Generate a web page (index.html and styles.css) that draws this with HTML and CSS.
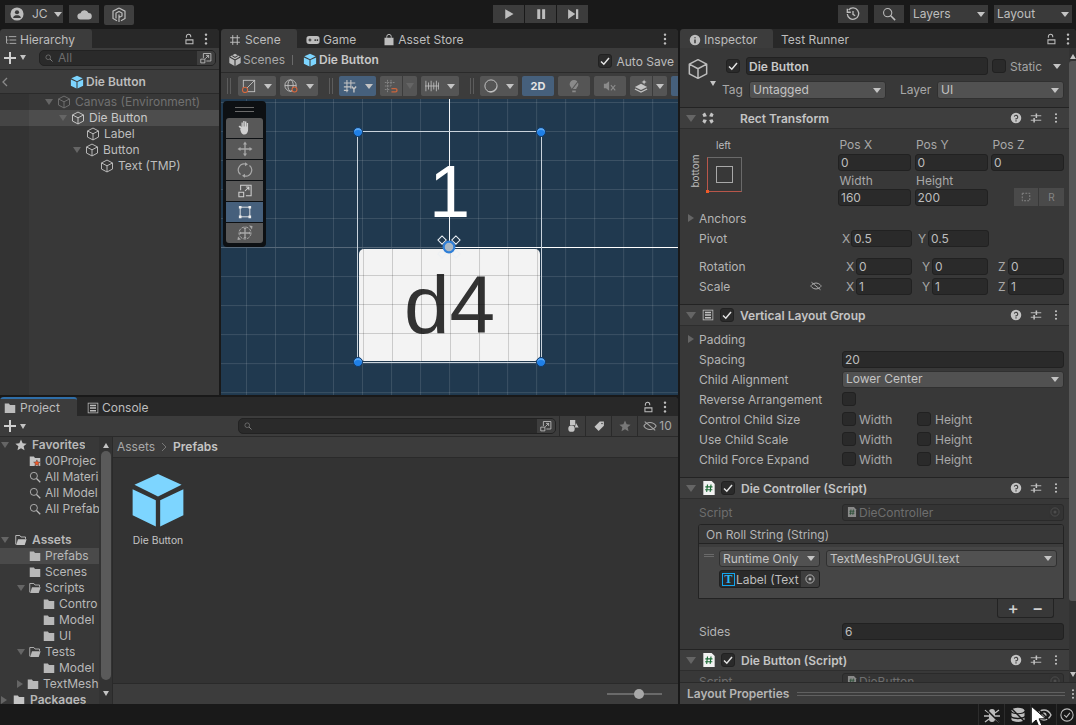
FILE: index.html
```html
<!DOCTYPE html>
<html lang="en">
<head>
<meta charset="utf-8">
<title>Unity Editor</title>
<link rel="stylesheet" href="styles.css">
</head>
<body>
<svg class="sprite" xmlns="http://www.w3.org/2000/svg">
  <symbol id="cube" viewBox="0 0 16 16"><path d="M8 1.2 14.300 4.500v7L8 14.800 1.700 11.500v-7zM1.700 4.500 8 7.800l6.300-3.300M8 7.800v7" fill="none" stroke="currentColor" stroke-width="1.100" stroke-linejoin="round"/></symbol>
  <symbol id="cubef" viewBox="0 0 16 16"><path d="M8 .8 14.500 3.800 8 7 1.500 3.800z" fill="#7dd5ff"/><path d="M1 5 7.400 8.100V15.300L1 12.200zM15 5 8.600 8.100V15.300L15 12.200z" fill="#7dd5ff"/></symbol>
  <symbol id="lock" viewBox="0 0 16 16"><path d="M4.500 9h8v4.500h-8zM5 6.500V5a2.500 2.500 0 0 1 5 0V6" fill="none" stroke="currentColor" stroke-width="1.200"/></symbol>
  <symbol id="kebab" viewBox="0 0 16 16"><g fill="currentColor"><circle cx="8" cy="3" r="1.400"/><circle cx="8" cy="8" r="1.400"/><circle cx="8" cy="13" r="1.400"/></g></symbol>
  <symbol id="list" viewBox="0 0 16 16"><path d="M5 3.500h10M6 8h9M6 12.500h9M1 3.500h2M3 8h1.500M3 12.500h1.500M2 3.500v9" fill="none" stroke="currentColor" stroke-width="1.100"/></symbol>
  <symbol id="hash" viewBox="0 0 16 16"><path d="M5 1.500v13M11 1.500v13M1.500 5h13M1.500 11h13" fill="none" stroke="currentColor" stroke-width="1.300"/></symbol>
  <symbol id="pad" viewBox="0 0 16 16"><path d="M3.500 3.500h9a3 3 0 0 1 3 3v3a3 3 0 0 1-3 3h-9a3 3 0 0 1-3-3v-3a3 3 0 0 1 3-3z" fill="currentColor"/><path d="M2.800 8h3.400M4.500 6.300v3.400" stroke="#282828" stroke-width="1.100"/><circle cx="10.500" cy="8" r="1" fill="#282828"/><circle cx="13" cy="8" r="1" fill="#282828"/></symbol>
  <symbol id="bag" viewBox="0 0 16 16"><path d="M2 5h12v10H2z" fill="currentColor"/><path d="M5 5V3.500a3 3 0 0 1 6 0V5" fill="none" stroke="currentColor" stroke-width="1.300"/></symbol>
  <symbol id="info" viewBox="0 0 16 16"><circle cx="8" cy="8" r="7" fill="currentColor"/><path d="M8 4.200v1.500M8 7.200v5" stroke="#3c3c3c" stroke-width="2"/></symbol>
  <symbol id="unity" viewBox="0 0 16 16"><path d="M8 .8 14.500 4.500v7L8 15.200 1.500 11.500v-7z" fill="currentColor"/><path d="M8 8 8 15M8 8 2 4.500M8 8l6-3.500M4.800 3 8 5l3.200-2" stroke="#3c3c3c" stroke-width="1.300" fill="none"/></symbol>
  <symbol id="user" viewBox="0 0 16 16"><circle cx="8" cy="8" r="7.500" fill="currentColor"/><circle cx="8" cy="6" r="2.400" fill="#3a3a3a"/><path d="M3.500 12.500c.5-2.500 2.500-3 4.500-3s4 .5 4.500 3z" fill="#3a3a3a"/></symbol>
  <symbol id="cloud" viewBox="0 0 16 12"><path d="M4 11.500a3.500 3.500 0 0 1-.5-7A4.800 4.800 0 0 1 12.400 4.300 3.600 3.600 0 0 1 12.300 11.500z" fill="currentColor"/></symbol>
  <symbol id="collab" viewBox="0 0 16 16"><path d="M8 1 14 4.200v7.200L10 13.700M8 1 2 4.200v7.200L6 13.700M5 11.600V6l3-1.600L11 6v3L8 10.500M8 7.500V15" fill="none" stroke="currentColor" stroke-width="1.200"/></symbol>
  <symbol id="play" viewBox="0 0 16 16"><path d="M3 1.500 14 8 3 14.500z" fill="currentColor"/></symbol>
  <symbol id="pause" viewBox="0 0 16 16"><path d="M3 1.500h4v13H3zM9.500 1.500h4v13h-4z" fill="currentColor"/></symbol>
  <symbol id="step" viewBox="0 0 16 16"><path d="M1.500 1.500 11 8l-9.500 6.500zM12 1.500h3v13h-3z" fill="currentColor"/></symbol>
  <symbol id="hist" viewBox="0 0 16 16"><path d="M3 3.400A6.500 6.500 0 1 1 1.500 8M1.500 2v4h4M8 4.500V8.500l2.500 1.500" fill="none" stroke="currentColor" stroke-width="1.500"/></symbol>
  <symbol id="search" viewBox="0 0 16 16"><circle cx="6.500" cy="6.500" r="4.700" fill="none" stroke="currentColor" stroke-width="1.200"/><path d="M10 10l5 5" stroke="currentColor" stroke-width="1.700"/></symbol>
  <symbol id="folder" viewBox="0 0 16 14"><path d="M1 1h5.500l1.500 2h7v10.500H1z" fill="currentColor"/></symbol>
  <symbol id="folderstar" viewBox="0 0 16 14"><path d="M1 1h5.500l1.500 2h7v10.500H1z" fill="#c4c4c4"/><path d="M10.500 5.500l1.300 2.800 3 .3-2.300 2 .7 3-2.700-1.600-2.700 1.600.7-3-2.300-2 3-.3z" fill="#f0592a" stroke="#383838" stroke-width=".6"/></symbol>
  <symbol id="folderopen" viewBox="0 0 16 14"><path d="M1 12.800V1h5.500L8 3h6v2.500" fill="none" stroke="currentColor" stroke-width="1.200"/><path d="M1.500 13.500 4 6h11.500l-2.500 7.500z" fill="currentColor"/></symbol>
  <symbol id="star" viewBox="0 0 16 16"><path d="M8 .8l2.200 4.900 5.300.6-4 3.500 1.200 5.200L8 12.300 3.300 15l1.200-5.200-4-3.500 5.300-.6z" fill="currentColor"/></symbol>
  <symbol id="ext" viewBox="0 0 16 16"><path d="M4.500 8V2h10v10h-6M11.500 4.500 7 9M8 4.500h3.500V8M1 9.500h5.500v5H1z" fill="none" stroke="currentColor" stroke-width="1.100"/></symbol>
  <symbol id="hand" viewBox="0 0 16 16"><path d="M4 9 1.500 6.500 3 5.500 4.500 7V2.500h1.300V6.500h.4V1h1.400v5.500h.4V1.500h1.400v5h.4V3h1.300v6.500c0 3-1.500 5-4 5s-3.200-2.500-4-5.500z" fill="currentColor"/></symbol>
  <symbol id="move" viewBox="0 0 16 16"><path d="M8 2.500v11M2.500 8h11" stroke="currentColor" stroke-width="1.300"/><path d="M8 .5 10 3.500H6zM8 15.500l2-3H6zM.5 8l3-2v4zM15.500 8l-3-2v4z" fill="currentColor"/></symbol>
  <symbol id="rotate" viewBox="0 0 16 16"><path d="M3.500 12.500A6 6 0 0 1 8.500 2M12.500 3.500A6 6 0 0 1 7.500 14" fill="none" stroke="currentColor" stroke-width="1.200"/><path d="M8 .3v4l3-2zM8 15.700v-4l-3 2z" fill="currentColor"/></symbol>
  <symbol id="scale" viewBox="0 0 16 16"><path d="M3 7V1.500h12v12H9M8 8l4.500-4.500M9 3.500h3.500V7M1 9.500h5.500v5H1z" fill="none" stroke="currentColor" stroke-width="1.200"/></symbol>
  <symbol id="rect" viewBox="0 0 16 16"><path d="M2.500 3v10M13.500 3v10M3 2.500h10M3 13.500h10" stroke="currentColor" stroke-width="1" fill="none"/><path d="M1 1h3v3H1zM12 1h3v3h-3zM1 12h3v3H1zM12 12h3v3h-3z" fill="currentColor"/></symbol>
  <symbol id="xform" viewBox="0 0 16 16"><circle cx="8" cy="8" r="6" fill="none" stroke="currentColor" stroke-width="1" stroke-dasharray="3 1"/><path d="M8 3.500v9M3.500 8h9" stroke="currentColor" stroke-width="1.300"/><path d="M8 2 9.500 4h-3zM8 14l1.500-2h-3zM2 8l2-1.500v3zM14 8l-2-1.500v3zM12 .5l3.500.5-.5 3.500zM1 11.500l-.5 3.500 3.500-.5z" fill="currentColor"/></symbol>
  <symbol id="anch" viewBox="0 0 16 16"><path d="M.5 3 4 .5 6.500 5.500 2 6.500zM15.500 3 12 .5 9.500 5.500 14 6.500zM.5 13 4 15.500 6.500 10.500 2 9.500zM15.500 13 12 15.500 9.500 10.500 14 9.500z" fill="currentColor"/></symbol>
  <symbol id="vlg" viewBox="0 0 16 16"><rect x="1.500" y="1.500" width="13" height="13" fill="none" stroke="currentColor" stroke-width="1"/><path d="M4 4.500h8M4 8h8M4 11.500h8" stroke="currentColor" stroke-width="2"/></symbol>
  <symbol id="help" viewBox="0 0 16 16"><circle cx="8" cy="8" r="7" fill="currentColor"/><path d="M5.800 6.200A2.300 2.300 0 1 1 8 9v1" fill="none" stroke="#3e3e3e" stroke-width="1.500"/><path d="M7.200 11h1.600v1.600H7.200z" fill="#3e3e3e"/></symbol>
  <symbol id="sliders" viewBox="0 0 16 16"><path d="M1 5h14M1 11h14" stroke="currentColor" stroke-width="1.200"/><path d="M9.500 2v6h-2V2zM6.500 8v6h-2V8z" fill="currentColor"/></symbol>
  <symbol id="script" viewBox="0 0 16 16"><path d="M1.500 0H11l3.500 3.500V16h-13z" fill="#f2f2f2"/><path d="M6.300 4 5.300 12.500M10.300 4 9.300 12.500M3.800 6.700h8.200M3.600 10h8.200" stroke="#1c6b36" stroke-width="1.300"/></symbol>
  <symbol id="eyeoff" viewBox="0 0 16 16"><path d="M1 8s2.500-4 7-4 7 4 7 4-2.500 4-7 4-7-4-7-4z" fill="none" stroke="currentColor" stroke-width="1.200"/><path d="M2 3 14 13" stroke="currentColor" stroke-width="1.200"/></symbol>
  <symbol id="statuseye" viewBox="0 0 16 16"><path d="M1 8s2.500-5 7-5 7 5 7 5-2.500 5-7 5-7-5-7-5z" fill="none" stroke="currentColor" stroke-width="1.400"/><circle cx="8" cy="8" r="2.500" fill="currentColor"/><path d="M1 1l14 14" stroke="#191919" stroke-width="1.500"/></symbol>
  <symbol id="target" viewBox="0 0 16 16"><circle cx="8" cy="8" r="5.500" fill="none" stroke="currentColor" stroke-width="1.200"/><circle cx="8" cy="8" r="2" fill="currentColor"/></symbol>
  <symbol id="bug" viewBox="0 0 16 16"><path d="M5 5a3 3 0 0 1 6 0v7a3 3 0 0 1-6 0z" fill="currentColor"/><path d="M1 3l4 3M15 3l-4 3M0 9h5M16 9h-5M1 15l4-3M15 15l-4-3" stroke="currentColor" stroke-width="1.300"/><path d="M1 1l14 14" stroke="#191919" stroke-width="1.500"/></symbol>
  <symbol id="db" viewBox="0 0 16 16"><ellipse cx="8" cy="3.500" rx="6.500" ry="2.800" fill="currentColor"/><path d="M1.500 5.500c1 2.300 12 2.300 13 0V9c-1 2.300-12 2.300-13 0zM1.500 10.500c1 2.300 12 2.300 13 0v2.300c-1 2.800-12 2.800-13 0z" fill="currentColor"/><path d="M1 1l14 14" stroke="#191919" stroke-width="1.500"/></symbol>
  <symbol id="check" viewBox="0 0 16 16"><circle cx="8" cy="8" r="7" fill="none" stroke="currentColor" stroke-width="1.200"/><path d="M4.800 8 7.300 10.500 11.300 5.500" fill="none" stroke="currentColor" stroke-width="1.200"/></symbol>
  <symbol id="tick" viewBox="0 0 12 12"><path d="M2 6.500 4.800 9.200 10 3" fill="none" stroke="currentColor" stroke-width="1.500"/></symbol>
  <symbol id="snapgrid" viewBox="0 0 16 16"><path d="M4 1v14M8 1v7M1 4h11M1 8h7M1 12h6" stroke="currentColor" stroke-width="1" stroke-dasharray="2 1"/><path d="M8.500 11h4.500a1.800 1.800 0 0 1 0 3.700H8.500" fill="none" stroke="#c9653d" stroke-width="1.600"/></symbol>
  <symbol id="gridy" viewBox="0 0 16 16"><path d="M4.500 1v14M9 1v10M1 4.500h13M1 9h8M1 13h5" stroke="currentColor" stroke-width="1.200"/><path d="M10 8.500l2.500 3 2.500-3M12.500 11.500V15.500" fill="none" stroke="currentColor" stroke-width="1.600"/></symbol>
  <symbol id="ticks" viewBox="0 0 16 16"><path d="M1 2v12M4 4v8M7 2v12M10 4v8M13 2v12M15.500 4v8M0 8h16" stroke="currentColor" stroke-width=".9"/></symbol>
  <symbol id="gizsq" viewBox="0 0 16 16"><rect x="1.500" y="1.500" width="13" height="13" fill="none" stroke="currentColor" stroke-width="1"/><path d="M1.500 14.500 14.500 1.500" stroke="currentColor" stroke-width="1"/><circle cx="3.500" cy="12.500" r="3" fill="#555" stroke="#d9673c" stroke-width="1.200"/></symbol>
  <symbol id="globe" viewBox="0 0 16 16"><circle cx="7.500" cy="7.500" r="6.500" fill="none" stroke="currentColor" stroke-width="1"/><ellipse cx="7.500" cy="7.500" rx="3" ry="6.500" fill="none" stroke="currentColor" stroke-width="1"/><path d="M1 7.500h13" stroke="currentColor" stroke-width="1"/><circle cx="12" cy="12" r="2.800" fill="#555" stroke="#d9673c" stroke-width="1.200"/></symbol>
  <symbol id="shade" viewBox="0 0 16 16"><circle cx="8" cy="8" r="7" fill="none" stroke="currentColor" stroke-width="1.100"/><path d="M14.800 7A7 7 0 0 1 3 13 8 8 0 0 0 14.800 7z" fill="currentColor"/></symbol>
  <symbol id="bulb" viewBox="0 0 16 16"><path d="M5.500 11.500C5 9 3 8.500 3 6a5 5 0 0 1 10 0c0 2.500-2 3-2.500 5.500z" fill="currentColor"/><path d="M6 13h4v2H6z" fill="currentColor"/><path d="M14 1 4 14" stroke="#555" stroke-width="1.200"/></symbol>
  <symbol id="audio" viewBox="0 0 16 16"><path d="M1 5.500h2.500L7 2.500v11L3.500 10.500H1z" fill="currentColor"/><path d="M9 7l5 6M14 7l-5 6" stroke="currentColor" stroke-width="1.300"/></symbol>
  <symbol id="fx" viewBox="0 0 16 16"><path d="M1 9l7-3.500L15 9l-7 3.500z" fill="currentColor"/><path d="M1 11.500l7 3.500 7-3.500" fill="none" stroke="currentColor" stroke-width="1.300"/><path d="M11.500.5l.8 2.200 2.200.8-2.200.8-.8 2.200-.8-2.200-2.200-.8 2.200-.8z" fill="currentColor"/></symbol>
  <symbol id="types" viewBox="0 0 16 16"><rect x="4" y="0" width="7" height="7" fill="currentColor"/><circle cx="6" cy="11.500" r="4.300" fill="currentColor"/><path d="M12 4l3.500 6h-5z" fill="currentColor"/></symbol>
  <symbol id="tag" viewBox="0 0 16 16"><path d="M9 2h5.500v5.500l-7 7-5.500-5.500z" fill="currentColor"/><circle cx="12" cy="4.800" r="1" fill="#3c3c3c"/></symbol>
</svg>

<div class="app">
  <header class="topbar">
    <button class="tb tb-acct"><svg class="i14"><use href="#user"/></svg><span class="acct-name">JC</span><i class="tri-d light"></i></button>
    <button class="tb tb-ico tb-cloud"><svg class="i-cloud"><use href="#cloud"/></svg></button>
    <button class="tb tb-ico tb-collab"><svg class="i16"><use href="#collab"/></svg></button>
    <div class="playgroup">
      <button class="pb"><svg class="i12"><use href="#play"/></svg></button>
      <button class="pb"><svg class="i12"><use href="#pause"/></svg></button>
      <button class="pb"><svg class="i12"><use href="#step"/></svg></button>
    </div>
    <button class="tb tb-ico tb-hist"><svg class="i14"><use href="#hist"/></svg></button>
    <button class="tb tb-ico tb-srch"><svg class="i14"><use href="#search"/></svg></button>
    <button class="tb tb-dd"><span>Layers</span><i class="tri-d light"></i></button>
    <button class="tb tb-dd"><span>Layout</span><i class="tri-d light"></i></button>
  </header>

  <main class="workspace">
    <div class="leftzone">
      <div class="upper">
        <section class="panel hierarchy">
          <div class="tabs">
            <div class="tab active tab-hier"><svg class="i12"><use href="#list"/></svg><span>Hierarchy</span></div>
            <div class="tabtools"><svg class="i14"><use href="#lock"/></svg><svg class="i14"><use href="#kebab"/></svg></div>
          </div>
          <div class="hier-tools">
            <span class="plus"></span><i class="tri-d light small"></i>
            <div class="searchbox sb-hier"><svg class="i8"><use href="#search"/></svg><span class="ph">All</span><span class="sb-side"><svg class="i12"><use href="#ext"/></svg></span></div>
          </div>
          <div class="prefab-head"><svg class="i-back" viewBox="0 0 6 10"><path d="M5 1 1 5l4 4" fill="none" stroke="currentColor" stroke-width="1.300"/></svg><svg class="i14 cubeb"><use href="#cubef"/></svg><b>Die Button</b></div>
          <div class="tree">
            <div class="hrow l0 dim"><i class="tri-d"></i><svg class="i14"><use href="#cube"/></svg><span>Canvas (Environment)</span></div>
            <div class="hrow l1 sel"><i class="tri-d"></i><svg class="i14"><use href="#cube"/></svg><span>Die Button</span></div>
            <div class="hrow l2"><i class="nop"></i><svg class="i14"><use href="#cube"/></svg><span>Label</span></div>
            <div class="hrow l2"><i class="tri-d"></i><svg class="i14"><use href="#cube"/></svg><span>Button</span></div>
            <div class="hrow l3"><i class="nop"></i><svg class="i14"><use href="#cube"/></svg><span>Text (TMP)</span></div>
          </div>
        </section>

        <section class="panel scene">
          <div class="tabs">
            <div class="tab active tab-scene"><svg class="i12"><use href="#hash"/></svg><span>Scene</span></div>
            <div class="tab tab-game"><svg class="i14"><use href="#pad"/></svg><span>Game</span></div>
            <div class="tab tab-store"><svg class="i12"><use href="#bag"/></svg><span>Asset Store</span></div>
            <div class="tabtools"><svg class="i14"><use href="#kebab"/></svg></div>
          </div>
          <div class="crumbs">
            <svg class="i14"><use href="#unity"/></svg><span class="c-scenes">Scenes</span><span class="c-sep"></span>
            <svg class="i14"><use href="#cubef"/></svg><b class="c-die">Die Button</b>
            <span class="autosave"><span class="cb on"><svg><use href="#tick"/></svg></span><span class="as-label">Auto Save</span></span>
          </div>
          <div class="scene-tools">
            <span class="grip g1"></span>
            <span class="st w38"><svg class="i14"><use href="#gizsq"/></svg><i class="tri-d light"></i></span>
            <span class="st w38"><svg class="i14"><use href="#globe"/></svg><i class="tri-d light"></i></span>
            <span class="grip g2"></span>
            <span class="st w22 blue nojoin"><svg class="i14"><use href="#gridy"/></svg></span>
            <span class="st w15 blue join-r"><i class="tri-d light"></i></span>
            <span class="st w22 join-l"><svg class="i14 dimic"><use href="#snapgrid"/></svg></span>
            <span class="st w14 join-r"><i class="tri-d"></i></span>
            <span class="st w38"><svg class="i14"><use href="#ticks"/></svg><i class="tri-d light"></i></span>
            <span class="grip g3"></span>
            <span class="st w38"><svg class="i14"><use href="#shade"/></svg><i class="tri-d light"></i></span>
            <span class="st w32 blue two-d">2D</span>
            <span class="st w32"><svg class="i14 dimic"><use href="#bulb"/></svg></span>
            <span class="st w32"><svg class="i14 dimic"><use href="#audio"/></svg></span>
            <span class="st w22 join-l"><svg class="i14"><use href="#fx"/></svg></span>
            <span class="st w14 join-r"><i class="tri-d light"></i></span>
            <span class="st w32 blue"></span>
          </div>
          <div class="viewport">
            <div class="palette">
              <div class="pal-grip"></div>
              <div class="pal-btn"><svg class="i16"><use href="#hand"/></svg></div>
              <div class="pal-btn"><svg class="i16"><use href="#move"/></svg></div>
              <div class="pal-btn"><svg class="i16"><use href="#rotate"/></svg></div>
              <div class="pal-btn"><svg class="i14"><use href="#scale"/></svg></div>
              <div class="pal-btn on"><svg class="i14"><use href="#rect"/></svg></div>
              <div class="pal-btn"><svg class="i16"><use href="#xform"/></svg></div>
            </div>
            <div class="axis-h"></div>
            <div class="axis-h-bright"></div>
            <div class="axis-v"></div>
            <div class="die-label">1</div>
            <div class="die-btn">d4</div>
            <div class="sel-rect"><i class="h h-tl"></i><i class="h h-tr"></i><i class="h h-bl"></i><i class="h h-br"></i></div>
            <svg class="pivot" viewBox="0 0 26 26"><g fill="none" stroke="#e8eef4" stroke-width="1.100"><path d="M5.500 1 1 5.500 5.500 10 10 5.500zM20.500 1 16 5.500 20.500 10 25 5.500z"/><path d="M5.500 16 1 20.500 5.500 25 10 20.500zM20.500 16 16 20.500 20.500 25 25 20.500z" stroke-opacity=".5"/></g><circle cx="13" cy="13" r="5.800" fill="#a9b7c4" stroke="#2f7fd8" stroke-width="2.400"/></svg>
          </div>
        </section>
      </div>

      <section class="panel project">
        <div class="tabs">
          <div class="tab active tab-proj"><svg class="i12"><use href="#folder"/></svg><span>Project</span></div>
          <div class="tab tab-cons"><svg class="i12"><use href="#vlg"/></svg><span>Console</span></div>
          <div class="tabtools"><svg class="i14"><use href="#lock"/></svg><svg class="i14"><use href="#kebab"/></svg></div>
        </div>
        <div class="proj-tools">
          <span class="plus"></span><i class="tri-d light small"></i>
          <div class="searchbox sb-proj"><svg class="i8"><use href="#search"/></svg><span class="sb-side"><svg class="i12"><use href="#ext"/></svg></span></div>
          <span class="pt"><svg class="i12"><use href="#types"/></svg></span>
          <span class="pt"><svg class="i12"><use href="#tag"/></svg></span>
          <span class="pt faint"><svg class="i12"><use href="#star"/></svg></span>
          <span class="pt pt-wide"><svg class="i14"><use href="#eyeoff"/></svg>10</span>
        </div>
        <div class="proj-body">
          <div class="ptree">
            <div class="prow bold"><i class="tri-d"></i><svg class="i12"><use href="#star"/></svg><span>Favorites</span></div>
            <div class="prow ind1"><svg class="i12"><use href="#folderstar"/></svg><span>00Projec</span></div>
            <div class="prow ind1"><svg class="i12"><use href="#search"/></svg><span>All Materi</span></div>
            <div class="prow ind1"><svg class="i12"><use href="#search"/></svg><span>All Model</span></div>
            <div class="prow ind1"><svg class="i12"><use href="#search"/></svg><span>All Prefab</span></div>
            <div class="prow bold gap15"><i class="tri-d"></i><svg class="i12"><use href="#folderopen"/></svg><span>Assets</span></div>
            <div class="prow ind1 sel"><svg class="i12"><use href="#folder"/></svg><span>Prefabs</span></div>
            <div class="prow ind1"><svg class="i12"><use href="#folder"/></svg><span>Scenes</span></div>
            <div class="prow ind1a"><i class="tri-d"></i><svg class="i12"><use href="#folderopen"/></svg><span>Scripts</span></div>
            <div class="prow ind2"><svg class="i12"><use href="#folder"/></svg><span>Contro</span></div>
            <div class="prow ind2"><svg class="i12"><use href="#folder"/></svg><span>Model</span></div>
            <div class="prow ind2"><svg class="i12"><use href="#folder"/></svg><span>UI</span></div>
            <div class="prow ind1a"><i class="tri-d"></i><svg class="i12"><use href="#folderopen"/></svg><span>Tests</span></div>
            <div class="prow ind2"><svg class="i12"><use href="#folder"/></svg><span>Model</span></div>
            <div class="prow ind1a"><i class="tri-r"></i><svg class="i12"><use href="#folder"/></svg><span>TextMesh</span></div>
            <div class="prow bold"><i class="tri-r"></i><svg class="i12"><use href="#folder"/></svg><span>Packages</span></div>
          </div>
          <div class="pscroll"><i class="tri-u light small"></i><div class="pthumb"></div><i class="tri-d light small"></i></div>
          <div class="pmain">
            <div class="pcrumbs"><span>Assets</span><svg class="i-chev" viewBox="0 0 6 10"><path d="M1 1l4 4-4 4" fill="none" stroke="currentColor"/></svg><b>Prefabs</b></div>
            <div class="pgrid">
              <figure class="asset"><svg class="asset-ic"><use href="#cubef"/></svg><figcaption>Die Button</figcaption></figure>
            </div>
            <div class="pfoot"><div class="zoomer"><i></i></div></div>
          </div>
        </div>
      </section>
    </div>

    <section class="panel inspector">
      <div class="tabs">
        <div class="tab active tab-insp"><svg class="i12"><use href="#info"/></svg><span>Inspector</span></div>
        <div class="tab tab-test"><span>Test Runner</span></div>
        <div class="tabtools"><svg class="i14"><use href="#lock"/></svg><svg class="i14"><use href="#kebab"/></svg></div>
      </div>
      <div class="insp-wrap">
        <div class="insp-scroll">
          <div class="go-head">
            <div class="go-icon"><svg class="i22"><use href="#cube"/></svg><i class="tri-d light small"></i></div>
            <div class="go-rows">
              <div class="go-row1">
                <span class="cb on"><svg><use href="#tick"/></svg></span>
                <span class="fld name">Die Button</span>
                <span class="cb"></span><span class="static">Static</span><i class="tri-d light"></i>
              </div>
              <div class="go-row2">
                <span class="tag-l">Tag</span><span class="dd dd-tag">Untagged<i class="tri-d light"></i></span>
                <span class="layer-l">Layer</span><span class="dd dd-layer">UI<i class="tri-d light"></i></span>
              </div>
            </div>
          </div>

          <div class="comp"><i class="tri-d"></i><svg class="i12 c-ic"><use href="#anch"/></svg><b class="c-title rt-title">Rect Transform</b><span class="c-tools"><svg class="i12"><use href="#help"/></svg><svg class="i12"><use href="#sliders"/></svg><svg class="i12"><use href="#kebab"/></svg></span></div>
          <div class="rt-top">
            <div class="anchor">
              <span class="a-left">left</span><span class="a-bottom">bottom</span>
              <div class="a-box"><div class="a-inner"></div><i class="a-dot"></i></div>
            </div>
            <div class="rt-grid">
              <label>Pos X</label><label>Pos Y</label><label>Pos Z</label>
              <span class="fld">0</span><span class="fld">0</span><span class="fld">0</span>
              <label class="l2nd">Width</label><label class="l2nd">Height</label><label class="l2nd"></label>
              <span class="fld">160</span><span class="fld">200</span>
              <span class="rt-btns"><span class="rb"><svg class="i10" viewBox="0 0 16 16"><path d="M2 2h12v12H2z" fill="none" stroke="currentColor" stroke-width="1.600" stroke-dasharray="3 2"/></svg></span><span class="rb">R</span></span>
            </div>
          </div>
          <div class="row"><i class="tri-r"></i><span class="lbl">Anchors</span></div>
          <div class="row"><span class="lbl">Pivot</span><span class="xy x-piv">X</span><span class="fld f61">0.5</span><span class="xy y-piv">Y</span><span class="fld f61">0.5</span></div>
          <div class="row mt8"><span class="lbl">Rotation</span><span class="xy x-rot">X</span><span class="fld f56">0</span><span class="xy y-rot">Y</span><span class="fld f56">0</span><span class="xy y-rot">Z</span><span class="fld f56">0</span></div>
          <div class="row"><span class="lbl lbl-scale">Scale<svg class="i12"><use href="#eyeoff"/></svg></span><span class="xy x-rot">X</span><span class="fld f56">1</span><span class="xy y-rot">Y</span><span class="fld f56">1</span><span class="xy y-rot">Z</span><span class="fld f56">1</span></div>

          <div class="comp mt8"><i class="tri-d"></i><svg class="i12 c-ic"><use href="#vlg"/></svg><span class="cb on c-cb"><svg><use href="#tick"/></svg></span><b class="c-title">Vertical Layout Group</b><span class="c-tools"><svg class="i12"><use href="#help"/></svg><svg class="i12"><use href="#sliders"/></svg><svg class="i12"><use href="#kebab"/></svg></span></div>
          <div class="row mt3"><i class="tri-r"></i><span class="lbl">Padding</span></div>
          <div class="row"><span class="lbl">Spacing</span><span class="fld grow">20</span></div>
          <div class="row"><span class="lbl">Child Alignment</span><span class="dd grow">Lower Center<i class="tri-d light"></i></span></div>
          <div class="row"><span class="lbl">Reverse Arrangement</span><span class="cb"></span></div>
          <div class="row"><span class="lbl">Control Child Size</span><span class="cb"></span><span class="cb-l">Width</span><span class="cb"></span><span class="cb-l">Height</span></div>
          <div class="row"><span class="lbl">Use Child Scale</span><span class="cb"></span><span class="cb-l">Width</span><span class="cb"></span><span class="cb-l">Height</span></div>
          <div class="row"><span class="lbl">Child Force Expand</span><span class="cb"></span><span class="cb-l">Width</span><span class="cb"></span><span class="cb-l">Height</span></div>

          <div class="comp mt8"><i class="tri-d"></i><svg class="i14 c-ic"><use href="#script"/></svg><span class="cb on c-cb"><svg><use href="#tick"/></svg></span><b class="c-title">Die Controller (Script)</b><span class="c-tools"><svg class="i12"><use href="#help"/></svg><svg class="i12"><use href="#sliders"/></svg><svg class="i12"><use href="#kebab"/></svg></span></div>
          <div class="row mt3 off"><span class="lbl">Script</span><span class="fld grow obj"><svg class="i10"><use href="#script"/></svg>DieController<svg class="i12 obj-t"><use href="#target"/></svg></span></div>
          <div class="evt">
            <div class="evt-head">On Roll String (String)</div>
            <div class="evt-body">
              <div class="evt-row"><span class="ev-grip"></span><span class="dd ev-rt">Runtime Only<i class="tri-d light"></i></span><span class="dd ev-fn">TextMeshProUGUI.text<i class="tri-d light"></i></span></div>
              <div class="evt-row2"><span class="fld ev-obj"><span class="tmp">T</span><span class="ev-name">Label (Text</span><span class="ev-t"><svg class="i12"><use href="#target"/></svg></span></span></div>
            </div>
          </div>
          <div class="evt-foot"><span>+</span><span>−</span></div>
          <div class="row mt3"><span class="lbl">Sides</span><span class="fld grow">6</span></div>

          <div class="comp mt8"><i class="tri-d"></i><svg class="i14 c-ic"><use href="#script"/></svg><span class="cb on c-cb"><svg><use href="#tick"/></svg></span><b class="c-title">Die Button (Script)</b><span class="c-tools"><svg class="i12"><use href="#help"/></svg><svg class="i12"><use href="#sliders"/></svg><svg class="i12"><use href="#kebab"/></svg></span></div>
          <div class="row off"><span class="lbl">Script</span><span class="fld grow obj"><svg class="i10"><use href="#script"/></svg>DieButton<svg class="i12 obj-t"><use href="#target"/></svg></span></div>
        </div>
        <div class="vscroll"><i class="tri-u light small"></i><div class="vthumb"></div><i class="tri-d light small"></i></div>
      </div>
      <div class="layoutprops"><b>Layout Properties</b><span class="lp-lines"></span><svg class="i12"><use href="#kebab"/></svg></div>
    </section>
  </main>

  <footer class="status">
    <span class="st-cell"><svg class="i16"><use href="#bug"/></svg></span>
    <span class="st-cell"><svg class="i16"><use href="#db"/></svg></span>
    <span class="st-cell"><svg class="i16"><use href="#statuseye"/></svg></span>
    <span class="st-cell st-last"><svg class="i14"><use href="#check"/></svg></span>
    <svg class="cursor" viewBox="0 0 14 20"><path d="M1 1v15l4-3.500 2.500 6 2.500-1-2.500-6H13z" fill="#fff" stroke="#111" stroke-width=".8"/></svg>
  </footer>
</div>
</body>
</html>
```

FILE: styles.css
```css
* { box-sizing: border-box; }
html, body { margin: 0; padding: 0; }
body { width: 1076px; height: 725px; overflow: hidden; background: #191919; font: 12px/16px Inter, "Liberation Sans", sans-serif; color: #bdbdbd; }
.sprite { display: none; }
svg { display: block; flex: none; }
b { font-weight: 600; }
i { display: block; flex: none; font-style: normal; }
.i8 { width: 8px; height: 8px; }
.i10 { width: 10px; height: 10px; }
.i12 { width: 12px; height: 12px; }
.i14 { width: 14px; height: 14px; }
.i16 { width: 16px; height: 16px; }
.i22 { width: 22px; height: 22px; }

.tri-d { width: 0; height: 0; border-left: 4.500px solid transparent; border-right: 4.500px solid transparent; border-top: 6px solid #656565; }
.tri-d.light { border-top-color: #c4c4c4; border-left-width: 4px; border-right-width: 4px; border-top-width: 5px; }
.tri-d.small, .tri-u.small { border-left-width: 3.500px; border-right-width: 3.500px; }
.tri-u { width: 0; height: 0; border-left: 4px solid transparent; border-right: 4px solid transparent; border-bottom: 5px solid #c4c4c4; }
.tri-r { width: 0; height: 0; border-top: 4.500px solid transparent; border-bottom: 4.500px solid transparent; border-left: 6px solid #656565; }
.nop { width: 9px; }

.app { display: flex; flex-direction: column; height: 725px; }
.topbar { height: 29px; display: flex; align-items: flex-start; padding: 5px 0 0 5px; flex: none; }
.tb, .pb { height: 18px; border: 0; padding: 0; background: #3a3a3a; color: #bdbdbd; font: inherit; display: flex; align-items: center; justify-content: center; flex: none; }
.tb-acct { width: 58px; justify-content: flex-start; padding-left: 5px; }
.acct-name { margin: 0 7px 0 8px; width: 15px; }
.tb-ico { width: 30px; }
.tb-cloud { margin-left: 6px; }
.tb-collab { margin-left: 5px; height: 20px; background: #3f3f3f; border-radius: 2px; }
.i-cloud { width: 15px; height: 11px; }
.playgroup { display: flex; gap: 1px; margin-left: 359px; }
.pb { width: 31px; background: #3c3c3c; }
.tb-hist { margin-left: 250px; }
.tb-srch { margin-left: 6px; }
.tb-dd { width: 78px; justify-content: space-between; padding: 0 3px; margin-left: 6px; }

.workspace { height: 675px; display: flex; gap: 2px; flex: none; }
.leftzone { width: 678px; display: flex; flex-direction: column; gap: 2px; }
.upper { height: 366px; display: flex; gap: 2px; flex: none; }
.panel { background: #383838; border-radius: 4px 4px 0 0; overflow: hidden; display: flex; flex-direction: column; }
.tabs { height: 19px; display: flex; background: #282828; flex: none; align-items: stretch; }
.tab { display: flex; align-items: center; gap: 4px; padding-top: 2px; }
.tab.active { background: #3c3c3c; border-radius: 0 3px 0 0; }
.tabtools { margin-left: auto; display: flex; align-items: center; gap: 3px; padding-right: 6px; }

.hierarchy { width: 219px; flex: none; }
.tab-hier { width: 92px; padding-left: 5px; gap: 3px; }
.hier-tools { height: 22px; background: #3c3c3c; display: flex; align-items: center; border-bottom: 1px solid #2a2a2a; padding-bottom: 2px; flex: none; }
.plus { width: 12px; height: 12px; margin: 0 4px; flex: none; background: linear-gradient(#d0d0d0, #d0d0d0) center / 12px 2px no-repeat, linear-gradient(#d0d0d0, #d0d0d0) center / 2px 12px no-repeat; }
.searchbox { height: 16px; background: #2a2a2a; border: 1px solid #222; border-radius: 5px; display: flex; align-items: center; padding-left: 5px; color: #8c8c8c; flex: none; }
.sb-hier { width: 177px; margin-left: 13px; }
.ph { margin-left: 5px; color: #6d6d6d; }
.sb-side { margin-left: auto; width: 18px; height: 14px; background: #3e3e3e; display: flex; align-items: center; justify-content: center; color: #c4c4c4; border-radius: 0 4px 4px 0; }
.prefab-head { height: 24px; background: #3c3c3c; display: flex; align-items: center; border-bottom: 1px solid #2a2a2a; flex: none; }
.i-back { width: 6px; height: 10px; margin: 0 62px 0 2px; color: #8a8a8a; }
.cubeb { margin-right: 2px; }
.tree { flex: 1; background: linear-gradient(90deg, #333 29px, #383838 29px); }
.hrow { height: 16px; display: flex; align-items: center; }
.hrow .tri-d, .hrow .nop { margin-right: 4px; }
.hrow svg { margin-right: 4px; }
.l0 { padding-left: 45px; }
.l1 { padding-left: 59px; }
.l2 { padding-left: 73px; }
.l3 { padding-left: 87px; }
.hrow.dim { color: #707070; }
.hrow.sel { background: linear-gradient(90deg, #454545 29px, #4d4d4d 29px); color: #c8c8c8; }

.scene { width: 457px; flex: none; }
.tab-scene { width: 76px; padding-left: 8px; }
.tab-game { padding-left: 9px; gap: 3px; }
.tab-store { margin-left: 27px; gap: 3px; }
.crumbs { height: 25px; background: #3c3c3c; border-bottom: 1px solid #2a2a2a; display: flex; align-items: center; padding-left: 7px; flex: none; }
.c-scenes { color: #a8a8a8; margin-left: 1px; }
.c-sep { width: 1px; height: 10px; background: #6a6a6a; margin: 0 10px 0 7px; }
.c-die { margin-left: 2px; color: #c8c8c8; }
.autosave { margin-left: auto; display: flex; align-items: center; gap: 4px; padding: 2px 4px 0 0; }
.as-label { padding-top: 1px; }
.cb { width: 14px; height: 14px; background: #2a2a2a; border: 1px solid #212121; border-radius: 3px; flex: none; display: block; color: #e2e2e2; }
.cb svg { width: 12px; height: 12px; }
.scene-tools { height: 26px; background: #3c3c3c; display: flex; align-items: center; overflow: hidden; flex: none; }
.grip { width: 4px; height: 16px; border-left: 1px solid #5c5c5c; border-right: 1px solid #5c5c5c; flex: none; }
.g1 { margin: 0 7px 0 6px; }
.g2 { margin: 0 6px 0 7px; }
.g3 { margin: 0 6px 0 7px; }
.st { height: 20px; background: #555; border-radius: 2px; display: flex; align-items: center; justify-content: center; gap: 8px; flex: none; color: #c4c4c4; margin-right: 4px; }
.w38 { width: 38px; }
.w32 { width: 32px; }
.w22 { width: 22px; }
.w15 { width: 15px; }
.w14 { width: 14px; }
.st.blue { background: #46607c; }
.join-l { margin-right: 1px; border-radius: 2px 0 0 2px; }
.nojoin { margin-right: 0; border-radius: 2px 0 0 2px; }
.join-r { border-radius: 0 2px 2px 0; }
.two-d { font-size: 11px; font-weight: 700; color: #e4e4e4; }
.dimic { color: #8a8a8a; }

.viewport { position: relative; flex: 1; background-color: #20394f; background-image: linear-gradient(90deg, rgba(255,255,255,.12) 1px, transparent 1px), linear-gradient(rgba(255,255,255,.12) 1px, transparent 1px); background-size: 29.020px 29.020px; background-position: 25px 3px; overflow: hidden; }
.palette { position: absolute; left: 2px; top: 2px; width: 43px; height: 146px; background: #0d1013; border-radius: 4px; padding: 0 3px; z-index: 2; }
.pal-grip { height: 17px; margin: 0 9px; position: relative; }
.pal-grip::before { content: ""; display: block; height: 3px; border-top: 1px solid #6a6a6a; border-bottom: 1px solid #6a6a6a; position: relative; top: 6px; }
.pal-btn { height: 20px; background: #585858; margin-bottom: 1px; display: flex; align-items: center; justify-content: center; color: #d0d0d0; }
.pal-btn:nth-child(2) { border-radius: 3px 3px 0 0; }
.pal-btn:last-child { border-radius: 0 0 3px 3px; color: #a8a8a8; }
.pal-btn:nth-child(3), .pal-btn:nth-child(4) { color: #a8a8a8; }
.pal-btn.on { background: #46607c; color: #eee; }
.axis-h { position: absolute; left: 0; right: 0; top: 148px; height: 1px; background: #566879; }
.axis-h-bright { position: absolute; left: 228px; right: 0; top: 148px; height: 1px; background: #fff; }
.axis-v { position: absolute; left: 228px; top: 0; height: 148px; width: 1px; background: #f4f6f8; }
.die-label { position: absolute; left: 136px; width: 185px; top: 48px; height: 90px; text-align: center; font: 74px/90px "Liberation Sans", sans-serif; color: #fff; }
.die-btn { position: absolute; left: 138px; top: 150px; width: 181px; height: 112px; background: #f3f3f3; border-radius: 5px; text-align: center; font: 82px/112px "Liberation Sans", sans-serif; color: #323232; overflow: hidden; }
.die-btn::after { content: ""; position: absolute; inset: 0; background-image: linear-gradient(90deg, rgba(0,0,0,.17) 1px, transparent 1px), linear-gradient(rgba(0,0,0,.17) 1px, transparent 1px); background-size: 29.020px 29.020px; background-position: 4px 26px; }
.sel-rect { position: absolute; left: 136px; top: 32px; width: 185px; height: 232px; border: 1px solid #c9d3dc; }
.h { position: absolute; width: 10px; height: 10px; border-radius: 50%; background: #1f7fe6; border: 1px solid #123a66; box-shadow: inset 0 2px 0 #5aa8f5; }
.h-tl { left: -5px; top: -5px; }
.h-tr { right: -5px; top: -5px; }
.h-bl { left: -5px; bottom: -5px; }
.h-br { right: -5px; bottom: -5px; }
.pivot { position: absolute; left: 216px; top: 136px; width: 24px; height: 24px; }

.project { flex: 1; position: relative; }
.tab-proj { width: 77px; padding: 0 0 0 4px; border-top: 2px solid #2f6ea8; }
.tab-cons { margin-left: 10px; gap: 3px; }
.proj-tools { height: 21px; background: #3c3c3c; display: flex; align-items: center; border-bottom: 1px solid #2a2a2a; flex: none; }
.sb-proj { width: 318px; margin-left: 212px; }
.pt { width: 26px; height: 20px; border-left: 1px solid #2a2a2a; display: flex; align-items: center; justify-content: center; flex: none; color: #c4c4c4; }
.sb-proj + .pt { margin-left: 3px; }
.pt.faint { color: #787878; }
.pt-wide { width: 40px; gap: 2px; color: #a8a8a8; }
.proj-body { flex: 1; display: flex; min-height: 0; }
.ptree { width: 99px; overflow: hidden; flex: none; }
.prow { height: 16px; display: flex; align-items: center; white-space: nowrap; gap: 4px; color: #b8b8b8; padding-left: 15px; }
.prow.bold { font-weight: 600; padding-left: 1px; gap: 5px; }
.prow.bold svg { margin-left: 1px; color: #c4c4c4; }
.prow.ind1a { padding-left: 17px; gap: 4px; }
.prow.ind2 { padding-left: 43px; }
.prow.ind1 { padding-left: 29px; }
.prow.sel { background: #4a4a4a; }
.gap15 { margin-top: 15px; }
.prow span { overflow: hidden; }
.pscroll { width: 14px; flex: none; display: flex; flex-direction: column; align-items: center; background: #333; padding-top: 6px; border-right: 1px solid #2a2a2a; }
.pthumb { width: 10px; height: 229px; background: #5a5a5a; border-radius: 5px; margin: 3px 0 11px; }
.pmain { flex: 1; display: flex; flex-direction: column; background: #333; min-width: 0; }
.pcrumbs { height: 21px; background: #3c3c3c; border-bottom: 1px solid #2a2a2a; display: flex; align-items: center; padding-left: 4px; gap: 6px; color: #a8a8a8; flex: none; }
.pcrumbs b { color: #c4c4c4; }
.i-chev { width: 6px; height: 10px; color: #777; }
.pgrid { flex: 1; padding: 13px 0 0 14px; }
.asset { margin: 0; width: 62px; display: flex; flex-direction: column; align-items: center; }
.asset-ic { width: 58px; height: 58px; }
.asset figcaption { font-size: 10.300px; line-height: 14px; margin-top: 4px; white-space: nowrap; color: #c4c4c4; }
.pfoot { height: 21px; background: #3c3c3c; border-top: 1px solid #2a2a2a; flex: none; display: flex; align-items: center; justify-content: flex-end; padding-right: 16px; }
.zoomer { width: 55px; height: 2px; background: #6a6a6a; position: relative; }
.zoomer i { position: absolute; left: 27px; top: -4px; width: 10px; height: 10px; border-radius: 50%; background: #a8a8a8; }

.inspector { flex: 1; min-width: 0; }
.tab-insp { width: 93px; padding-left: 9px; gap: 3px; }
.tab-test { margin-left: 8px; }
.inspector .tabtools { padding-right: 1px; }
.insp-wrap { height: 634px; display: flex; flex: none; overflow: hidden; }
.insp-scroll { width: 389px; flex: none; overflow: hidden; }
.vscroll { width: 7px; flex: none; background: #333; display: flex; flex-direction: column; align-items: center; padding-top: 6px; }
.vthumb { width: 7px; height: 540px; background: #565656; border-radius: 3px 0 0 3px; margin: 2px 0 71px; }

.go-head { height: 59px; display: flex; padding: 9px 5px 0 7px; }
.go-icon { width: 39px; flex: none; }
.go-icon svg { margin-top: 1px; }
.go-icon .tri-d { margin: 1px 0 0 23px; }
.go-rows { flex: 1; }
.go-row1 { height: 18px; display: flex; align-items: center; padding-right: 3px; }
.fld { height: 17px; line-height: 15px; background: #2a2a2a; border: 1px solid #212121; border-radius: 3px; padding-left: 2px; display: block; color: #bdbdbd; flex: none; white-space: nowrap; overflow: hidden; }
.name { width: 242px; height: 18px; font-weight: 600; margin: 0 4px 0 6px; line-height: 18px; color: #c8c8c8; }
.static { margin: 0 auto 0 4px; color: #a4a4a4; padding-top: 2px; }
.go-row2 { height: 18px; margin: 6px 0 0 -4px; display: flex; align-items: center; color: #a8a8a8; }
.tag-l { width: 27px; }
.dd { height: 17px; line-height: 15px; background: #515151; border: 1px solid #303030; border-radius: 3px; padding: 0 4px 2px 3px; display: flex; align-items: center; justify-content: space-between; color: #c4c4c4; flex: none; white-space: nowrap; }
.dd .tri-d { margin-top: 2px; }
.evt .dd { padding-bottom: 0; }
.evt .dd .tri-d { margin-top: 0; }
.dd-tag { width: 137px; height: 18px; }
.layer-l { width: 37px; margin-left: 14px; }
.dd-layer { width: 127px; height: 18px; }

.comp { height: 22px; background: #3e3e3e; border-top: 1px solid #232323; border-bottom: 1px solid #2e2e2e; display: flex; align-items: center; padding-left: 6px; }
.comp > .tri-d { margin-right: 6px; border-left-width: 5px; border-right-width: 5px; border-top-width: 7px; }
.c-ic { margin-right: 5px; color: #c4c4c4; }
.c-ic.i12 { margin-right: 6px; }
.c-cb { margin-right: 6px; }
.c-title { color: #c4c4c4; white-space: nowrap; padding-top: 2px; }
.rt-title { margin-left: 20px; }
.c-tools { margin-left: auto; display: flex; gap: 8px; padding-right: 7px; color: #c4c4c4; }
.rt-top { height: 79px; display: flex; padding-top: 8px; }
.anchor { width: 158px; flex: none; position: relative; }
.a-left { position: absolute; left: 36px; top: 0; font-size: 10px; }
.a-bottom { position: absolute; left: -2px; top: 29px; font-size: 10px; line-height: 10px; transform: rotate(-90deg); width: 34px; text-align: center; }
.a-box { position: absolute; left: 27px; top: 20px; width: 35px; height: 35px; border: 1px solid #6a6a6a; border-left-color: #b8564a; border-bottom-color: #b8564a; display: flex; align-items: center; justify-content: center; }
.a-inner { width: 17px; height: 17px; border: 1px solid #a8a8a8; }
.a-dot { position: absolute; left: -2px; bottom: -2px; width: 3px; height: 3px; background: #f05a28; }
.rt-grid { width: 226px; display: grid; grid-template-columns: 73px 73px 73px; column-gap: 3.500px; grid-auto-rows: min-content; }
.rt-grid label { height: 17px; padding-left: 1.500px; color: #a8a8a8; }
.rt-grid label.l2nd { height: 18px; line-height: 20px; }
.rt-btns { display: flex; justify-content: flex-end; gap: 1px; }
.rb { width: 25px; height: 18px; background: #4a4a4a; display: flex; align-items: center; justify-content: center; font-size: 10px; color: #858585; margin-top: -1px; }
.rb:first-child { width: 24px; }
.row { height: 20px; display: flex; align-items: center; padding-left: 19px; padding-right: 5px; color: #b4b4b4; white-space: nowrap; }
.row .tri-r { margin: 0 5px 0 -11px; }
.mt8 { margin-top: 8px; }
.mt3 { margin-top: 3px; }
.lbl { width: 143px; flex: none; padding-top: 2px; }
.lbl-scale { display: flex; align-items: center; justify-content: space-between; padding-right: 20px; }
.lbl-scale svg { margin-top: -2px; }
.xy { flex: none; color: #a8a8a8; padding-top: 2px; }
.x-piv { margin-right: 1px; width: 8px; }
.f61 { width: 61px; }
.y-piv { margin: 0 2px 0 6px; width: 8px; }
.x-rot { margin-left: 4px; width: 10px; }
.f56 { width: 56px; }
.y-rot { margin-left: 10px; width: 10px; }
.grow { flex: 1; min-width: 0; }
.cb-l { width: 61px; padding: 2px 0 0 3px; color: #a8a8a8; flex: none; }
.row .cb-l:last-child { padding-left: 4px; }
.row.off, .row.off .fld { color: #6e6e6e; }
.row.off .fld { background: #343434; border-color: #2a2a2a; }
.obj { display: flex; align-items: center; gap: 2px; padding-left: 4px; }
.obj svg { opacity: .45; }
.obj-t { margin-left: auto; margin-right: 2px; }
.evt { margin-left: 18px; width: 366px; height: 75px; border: 1px solid #232323; border-radius: 3px 3px 0 0; overflow: hidden; margin-top: 2px; background: #464646; }
.evt-head { height: 19px; background: #383838; border-bottom: 1px solid #232323; padding-left: 7px; line-height: 20px; color: #b4b4b4; }
.evt-body { border-top: 3px solid #3d3d3d; padding-top: 3px; }
.evt-row { height: 17px; display: flex; align-items: center; padding-left: 5px; }
.ev-grip { width: 10px; height: 3px; border-top: 1px solid #6a6a6a; border-bottom: 1px solid #6a6a6a; margin: -6px 5px 0 0; flex: none; }
.ev-rt { width: 101px; margin-right: 6px; }
.ev-fn { width: 231px; }
.evt-row2 { margin: 3px 0 0 20px; }
.ev-obj { width: 101px; height: 18px; background: #2a2a2a; display: flex; align-items: center; padding: 0 0 0 2px; }
.tmp { width: 13px; height: 13px; border: 1px solid #12a4ec; font: 700 12px/11px "Liberation Serif", serif; color: #29b6f6; text-align: center; flex: none; }
.ev-name { margin-left: 1px; width: 66px; overflow: hidden; }
.ev-t { width: 18px; height: 16px; background: #3e3e3e; display: flex; align-items: center; justify-content: center; }
.evt-foot { margin-left: 317px; width: 57px; height: 19px; background: #383838; border: 1px solid #232323; border-top: 0; border-radius: 0 0 3px 3px; display: flex; align-items: center; justify-content: space-around; font-size: 17px; font-weight: 500; color: #d0d0d0; padding: 0 3px; }

.layoutprops { height: 22px; background: #3c3c3c; border-top: 1px solid #2a2a2a; display: flex; align-items: center; padding-left: 7px; flex: none; }
.layoutprops b { color: #b4b4b4; padding-top: 1px; }
.lp-lines { flex: 1; height: 4px; border-top: 1px solid #606060; border-bottom: 1px solid #606060; margin: 0 2px 0 8px; }
.layoutprops svg { margin-right: -3px; }

.status { height: 21px; flex: none; display: flex; align-items: stretch; justify-content: flex-end; color: #bdbdbd; position: relative; }
.st-cell { width: 26px; border-left: 1px solid #2c2c2c; display: flex; align-items: center; justify-content: center; }
.st-last { width: 20px; }
.cursor { position: absolute; left: 1030px; top: 1px; width: 17px; height: 24px; }
```
